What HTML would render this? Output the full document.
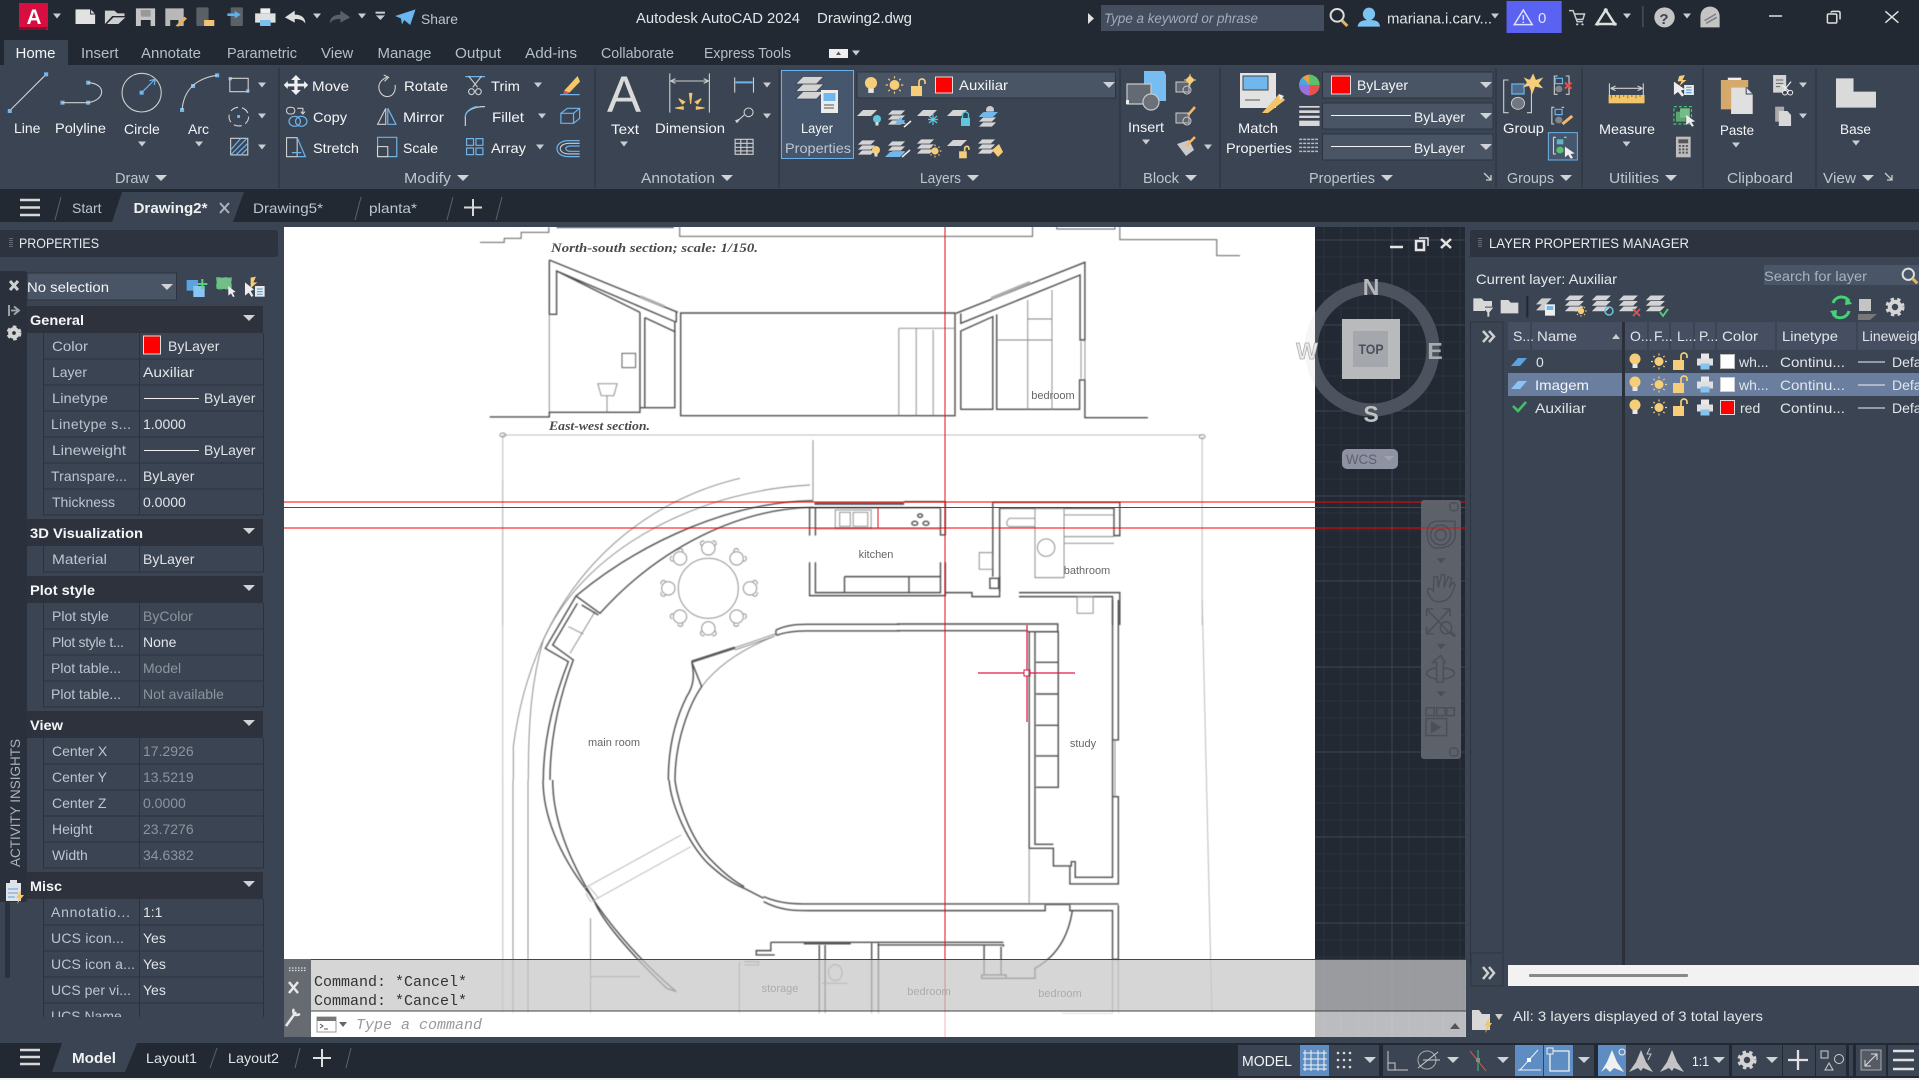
<!DOCTYPE html>
<html><head><meta charset="utf-8"><title>Autodesk AutoCAD 2024</title>
<style>
html,body{margin:0;padding:0;width:1919px;height:1080px;overflow:hidden;background:#222933}
svg{display:block;font-family:"Liberation Sans",sans-serif;font-size:14px}
svg *{vector-effect:non-scaling-stroke}
text{fill:#e2e6ea}
.m text,text.m{fill:#b4bfca}
.l text,text.l{fill:#bcc6d0}
.s{font-size:15px}
.w text,text.w{fill:#f4f6f8}
.d text,text.d{fill:#8d949e}
.h text{font-weight:bold;fill:#f4f6f8}
.p *{fill:none;stroke:#606060;stroke-width:1}
.p .t{stroke-width:1.4;stroke:#4e4e4e}
.p .f{stroke:#b5b5b5;stroke-width:.9}
.p .g{stroke:#858585;stroke-width:.9}
.pt text{fill:#666;font-size:11px}
.gl{stroke:#cfcfcf;fill:none;stroke-width:1.1}
.bl{stroke:#6cb4ea;fill:none;stroke-width:1.2}
.cmd{font-family:"Liberation Mono",monospace;font-size:15px}
</style></head><body>
<svg width="1919" height="1080" viewBox="0 0 1919 1080" xmlns="http://www.w3.org/2000/svg">
<defs>
<path id="c" d="M-4-2.5H4L0 2.5Z" fill="#c9ccd0"/>
<path id="cl" d="M-6-3H6L0 3Z" fill="#cfd2d6"/>
<g id="stack"><path d="M-6-9H8L3-4H-11ZM-6-4H8L3 1H-11ZM-6 1H8L3 6H-11Z" fill="#d4d4d4" stroke="#3b4453" stroke-width=".8"/></g>
<path id="plate" d="M-5-8H9L3-2H-11Z" fill="#d4d4d4"/>
<g id="bulb"><circle r="5.5" fill="#f6cd78"/><path d="M-2.5 5H2.5V9H-2.5Z" fill="#e8e8e8"/></g>
<g id="sun"><circle r="4.5" fill="#f6cd78"/><path d="M0-8V-6M0 6V8M-8 0H-6M6 0H8M-5.6-5.6L-4.3-4.3M5.6 5.6L4.3 4.3M-5.6 5.6L-4.3 4.3M5.6-5.6L4.3-4.3" stroke="#f6cd78" stroke-width="1.2" fill="none"/></g>
<g id="lock"><path d="M-7-1H4V9H-7Z" fill="#f6cd78"/><path d="M1-1V-5C1-9 7-9 7-5V-3" stroke="#f6cd78" stroke-width="1.7" fill="none"/></g>
<g id="print"><path d="M-4-8H4V-3H-4Z" fill="#e8e8e8"/><path d="M-8-3H8V4H-8Z" fill="#e0e0e0"/><path d="M-4.500 2H4.500V8H-4.500Z" fill="#84c4ef"/></g>
<g id="gear"><circle r="5.500" fill="none" stroke="#d4d4d4" stroke-width="4"/><circle r="8.500" fill="none" stroke="#d4d4d4" stroke-width="3" stroke-dasharray="3.400 3.270"/></g>
<g id="chair"><circle r="20" /><path d="M-20-8C-28-14-22-24-12-22M20-8C28-14 22-24 12-22"/></g>
<clipPath id="cr"><rect x="1315" y="227" width="150" height="300"/></clipPath>
<clipPath id="cw"><rect x="1240" y="227" width="75" height="300"/></clipPath>
<clipPath id="cvs"><rect x="284" y="227" width="1031" height="810"/></clipPath>
<clipPath id="rowc"><rect x="27" y="333" width="240" height="684"/></clipPath>
</defs>

<rect width="1919" height="1080" fill="#222933"/>
<!-- ribbon -->
<rect x="4" y="40" width="64" height="25" fill="#3b4453"/>
<rect y="65" width="1919" height="124" fill="#3b4453"/>
<path d="M279 68V188M595 68V188M779 68V188M1120 68V188M1220 68V188M1496 68V188M1582 68V188M1703 68V188M1816 68V188" stroke="#2a303b" stroke-width="1"/>
<!-- main body -->
<rect y="222" width="1919" height="821" fill="#3b4453"/>
<!-- model canvas -->
<rect x="1315" y="227" width="150" height="810" fill="#222933"/>
<g stroke="#2c333f" stroke-width="1"><path d="M1324 227V1037M1341 227V1037M1358 227V1037M1375 227V1037M1409 227V1037M1426 227V1037M1443 227V1037M1460 227V1037M1315 257H1465M1315 274H1465M1315 291H1465M1315 308H1465M1315 342H1465M1315 359H1465M1315 376H1465M1315 393H1465M1315 428H1465M1315 445H1465M1315 462H1465M1315 479H1465M1315 513H1465M1315 530H1465M1315 547H1465M1315 564H1465M1315 598H1465M1315 615H1465M1315 632H1465M1315 649H1465M1315 684H1465M1315 701H1465M1315 718H1465M1315 735H1465M1315 769H1465M1315 786H1465M1315 803H1465M1315 820H1465M1315 854H1465M1315 871H1465M1315 888H1465M1315 905H1465M1315 940H1465M1315 957H1465"/></g>
<path d="M1392 227V1037M1315 240H1465M1315 325H1465M1315 411H1465M1315 496H1465M1315 581H1465M1315 667H1465M1315 752H1465M1315 837H1465M1315 923H1465" stroke="#3c4555" stroke-width="1"/>
<rect x="284" y="227" width="1031" height="810" fill="#fff"/>

<!-- plan drawing -->
<g clip-path="url(#cvs)">
<g style="filter:blur(.45px)">
<g class="p" transform="translate(480,225) scale(.4847,.3333)">
<path d="M0 52H50V40H85V22H142V6"/>
<path d="M158 5H400" style="stroke-width:3;stroke:#666"/>
<path d="M412 5V34H1140V5M1190 5V12H1310V5M1320 5V44H1520V92H1568"/>
<path class="t" d="M143 105L408 262M143 105V268H158V138L330 262M158 138L402 290V320L340 278M405 262V292"/>
<path class="g" d="M143 268V562"/>
<path class="t" d="M20 576H143V562H330V262M340 278V548H402V320M340 548H330"/>
<path class="t" d="M414 264H980V572H414Z"/>
<path class="g" d="M864 310H980M864 310V572M900 310V572M935 315V572"/>
<path class="t" d="M982 265L1248 112V345H1238V150L992 295V265M992 318L1058 275V553H992ZM1066 268V553H1237V465H1248V578H1378"/>
<path class="g" d="M1130 225V553M1180 195V553M1130 282H1180M1066 345H1180M1248 345V465M1240 350V460"/>
<rect x="293" y="385" width="28" height="43"/>
<path class="g" d="M243 476H283L276 512H250ZM262 512V560"/>
<path d="M330 215L380 245M1055 220L1135 172" style="stroke-width:3;stroke:#aaa"/>
<!-- site -->
<path class="f" d="M47 630H1490M47 630V1200M1490 635V1200"/>
<circle cx="47" cy="630" r="6" class="g"/><circle cx="1490" cy="635" r="6" class="g"/>
<path class="g" d="M687 645V830"/>
<!-- kitchen -->
<path d="M690 836H875" style="stroke:#555;stroke-width:2.500"/>
<path class="t" d="M875 830H960M680 848H950M692 848V932M680 848V932M950 850V930H960V830"/>
<rect x="733" y="855" width="74" height="54" class="g"/><rect x="742" y="862" width="22" height="42" class="g"/><rect x="770" y="862" width="30" height="42" class="g"/>
<circle cx="908" cy="872" r="5" class="t"/><circle cx="897" cy="895" r="6" class="t"/><circle cx="920" cy="895" r="6" class="t"/>
<path class="g" d="M692 912H950"/>
<path class="t" d="M680 1012V1112H960V1012M692 1012V1103H950V1012"/>
<path class="t" d="M752 1055H950M752 1055V1103M885 1055V1103"/>
<!-- bathroom -->
<path class="t" d="M1058 832H1320V932H1308V850H1072V1100M1058 832V1055"/>
<rect x="1145" y="850" width="60" height="208" class="g"/>
<ellipse cx="1168" cy="968" rx="18" ry="26" class="g"/>
<path class="g" d="M1205 870H1308M1205 935H1308M1205 955H1308M1092 880H1145M1092 905H1145M1092 880C1085 890 1085 900 1092 905"/>
<rect x="1030" y="983" width="27" height="50" class="g"/>
<path class="t" d="M1112 1103H1320V1200M1112 1115H1305V1200M960 1103H1015V1115H1072V1055M1052 1060H1070V1090H1052Z"/>
<rect x="1232" y="1115" width="33" height="50" class="g"/>
</g>
<!-- arc walls + table (uniform crop coords) -->
<g class="p" transform="translate(500,480) scale(.3333)">
<path class="f" d="M8 0V900"/>
<path class="g" d="M720-5C400 70 100 330 40 800V900"/>
<path class="g" d="M930 15C620 30 260 190 130 480C95 600 85 720 85 900"/>
<path class="t" d="M938 62C700 65 430 180 228 348L136 505L205 545C160 660 130 780 130 900"/>
<path class="t" d="M940 82C720 85 480 200 300 400L228 348M232 370L158 495L220 540C175 660 150 780 150 900"/>
<path class="g" d="M285 395L210 520M205 440L250 462"/>
<path class="t" d="M245 375L295 405"/>
<!-- table -->
<circle cx="625" cy="325" r="90" class="g"/>
<use href="#chair" transform="translate(625,205)" class="g"/><use href="#chair" transform="translate(710,235) rotate(45)" class="g"/><use href="#chair" transform="translate(750,325) rotate(90)" class="g"/><use href="#chair" transform="translate(710,410) rotate(135)" class="g"/><use href="#chair" transform="translate(625,445) rotate(180)" class="g"/><use href="#chair" transform="translate(540,410) rotate(225)" class="g"/><use href="#chair" transform="translate(505,325) rotate(270)" class="g"/><use href="#chair" transform="translate(540,235) rotate(315)" class="g"/>
<!-- courtyard top -->
<path d="M575 545L705 503" style="stroke:#555;stroke-width:2.500"/>
<path class="g" d="M705 503L825 462M705 510L825 468M605 620C650 560 720 510 820 470"/>
<path class="t" d="M828 450C860 435 890 433 920 433H1200M830 466C860 455 890 453 920 453H1200M828 450V466"/>
<path class="t" d="M575 545C585 590 580 620 560 650C525 720 505 800 505 900M575 545L605 620C570 670 525 780 525 900"/>
</g>
<g class="p" transform="translate(480,600) scale(.4847,.3333)">
<path class="f" d="M47 540V1240M1490 0L1510 1240"/>
<path class="g" d="M68 540V1240M99 540V1240"/>
<path class="t" d="M130 540C130 640 160 760 225 880C260 960 320 1070 405 1175L385 1165C310 1060 250 960 235 900C175 760 150 640 150 540"/>
<path class="g" d="M228 955V1240"/>
<path class="g" d="M228 1130H330"/>
<path class="t" d="M390 540C395 620 430 730 470 790C500 830 520 850 545 865L585 895M402 540C410 620 440 730 480 785C505 822 525 845 545 860"/>
<path class="t" d="M585 890C620 912 650 912 680 912H1317M585 905C620 932 650 932 680 932H1166V915"/>
<path class="t" d="M860 72H1192V95H1130M860 92H1130"/>
<path class="t" d="M1133 95V745H1183V798H1220V785H1228V832H1305V0M1145 95V733H1183"/>
<path class="t" d="M1147 95H1193V562H1147M1147 187H1193M1147 282H1193M1147 376H1193M1147 468H1193"/>
<path class="t" d="M1317 0V420H1305M1305 590H1317V852H1217V800"/>
<path class="t" d="M1217 915V932H1305V1078H1317V915"/>
<path class="g" d="M1310 420V590M1133 745V915M1166 915H1217"/>
<path class="t" d="M1222 932C1215 1000 1195 1065 1145 1105V1135H1085"/>
<path class="t" d="M600 1027H1080M820 1035H1080V1040M600 1027V1052H570V1065H608"/>
<path d="M668 1030H765" style="stroke:#555;stroke-width:2.500"/>
<path class="t" d="M700 1035V1240M712 1035V1240M808 1030V1240M822 1030V1240M1040 1035V1125M1075 1040V1125M1035 1125H1085V1135H1035Z"/>
<path class="g" d="M535 1085V1240M545 1085H575V1095H545M705 1150H760"/>
<ellipse cx="733" cy="1118" rx="14" ry="24" class="g"/>
<path class="f" d="M415 705L215 865M435 740L230 905M225 860L245 895M218 880L228 905"/>
<path class="g" d="M1305 1078V1240M1317 1078V1240M1200 1240H1305"/>
</g>
</g>
<g class="pt">
<text x="876" y="558" text-anchor="middle">kitchen</text>
<text x="1087" y="574" text-anchor="middle">bathroom</text>
<text x="1053" y="399" text-anchor="middle">bedroom</text>
<text x="614" y="746" text-anchor="middle">main room</text>
<text x="1083" y="747" text-anchor="middle">study</text>
<text x="780" y="992" text-anchor="middle">storage</text>
<text x="929" y="995" text-anchor="middle">bedroom</text>
<text x="1060" y="997" text-anchor="middle">bedroom</text>
</g>
<text x="551" y="252" textLength="207" lengthAdjust="spacingAndGlyphs" style="font-family:'Liberation Serif',serif;font-style:italic;font-weight:bold;font-size:13px;fill:#4a4a4a">North-south section; scale:  1/150.</text>
<text x="549" y="430" textLength="101" lengthAdjust="spacingAndGlyphs" style="font-family:'Liberation Serif',serif;font-style:italic;font-weight:bold;font-size:13px;fill:#4a4a4a">East-west section.</text>
</g>

<!-- red lines -->
<path d="M284 502H1465M284 507.500H1465M284 528H1465" stroke="#f00" stroke-width="1"/>
<path d="M945 227V1037" stroke="#e0101a" stroke-width="1"/>
<path d="M878 507V528" stroke="#e0101a" stroke-width="1"/>
<path d="M978 673H1024M1030 673H1075M1027 625V670M1027 676V722" stroke="#e5194a" stroke-width="1.200"/>
<rect x="1024" y="670" width="6" height="6" fill="none" stroke="#e5194a" stroke-width="1"/>

<!-- viewcube -->
<circle cx="1372" cy="349" r="61" fill="none" stroke="#4d535e" stroke-width="13" clip-path="url(#cr)"/>
<circle cx="1372" cy="349" r="61" fill="none" stroke="#f6f6f6" stroke-width="13" clip-path="url(#cw)"/>
<rect x="1342" y="319" width="58" height="60" fill="#b9babc"/>
<rect x="1353" y="331" width="35" height="36" fill="#a4a7ac"/>
<text x="1371" y="354" text-anchor="middle" style="fill:#4a505c;font-weight:bold;font-size:14px" textLength="25" lengthAdjust="spacingAndGlyphs">TOP</text>
<g style="font-weight:bold;font-size:23px" text-anchor="middle">
<text x="1371" y="295" style="fill:#b5b7ba">N</text>
<text x="1435" y="359" style="fill:#a8abaf">E</text>
<text x="1371" y="422" style="fill:#bfc1c3">S</text>
<text x="1307" y="359" style="fill:#e8e8e8;stroke:#aaa;stroke-width:.7">W</text>
</g>
<rect x="1342" y="449" width="56" height="20" rx="5" fill="#8e92a2"/>
<text x="1346" y="464" style="fill:#5d6170;font-size:14px" textLength="31" lengthAdjust="spacingAndGlyphs">WCS</text>
<path d="M1384 456H1394L1389 461Z" fill="#a0a3b0"/>
<path d="M1390 247H1403" stroke="#e4e4e4" stroke-width="2.500"/>
<rect x="1416" y="241" width="8" height="9" fill="none" stroke="#e4e4e4" stroke-width="2.500"/><path d="M1419 238H1428V246" fill="none" stroke="#e4e4e4" stroke-width="1.500"/>
<path d="M1441 239L1451 248M1451 239L1441 248" stroke="#e4e4e4" stroke-width="2.500"/>

<!-- nav bar -->
<rect x="1421" y="500" width="40" height="259" rx="3" fill="#60656d" fill-opacity=".94"/>
<g transform="translate(1260,225) scale(.3333,.3571)" fill="none" stroke="#4b5058" stroke-width="1.500">
<rect x="570" y="778" width="24" height="22" rx="8"/>
<path d="M502 860C502 820 540 830 585 830V870C585 900 550 905 530 905C510 905 502 885 502 860Z"/>
<ellipse cx="542" cy="868" rx="30" ry="28"/><ellipse cx="542" cy="868" rx="16" ry="15"/>
<path d="M535 935H552L543 945Z" fill="#4b5058"/>
<path d="M510 1040C495 1020 505 1010 520 1025L522 985L532 985L535 1015L545 978L555 980L552 1015L565 985L575 990L568 1015L580 1000L585 1008C575 1040 565 1055 535 1055C525 1055 515 1050 510 1040Z"/>
<path d="M500 1075L570 1145M570 1075L500 1145M500 1075H520M500 1075V1095M570 1075H550M570 1075V1095M500 1145V1125M500 1145H520"/>
<circle cx="558" cy="1128" r="17"/><path d="M570 1140L586 1152" stroke-width="3"/>
<path d="M535 1175H552L543 1185Z" fill="#4b5058"/>
<path d="M530 1280V1225H518L542 1205L555 1225H550V1280ZM530 1240C490 1245 490 1265 530 1272M550 1240C595 1245 595 1265 550 1272"/>
<path d="M535 1308H552L543 1318Z" fill="#4b5058"/>
<rect x="498" y="1352" width="25" height="22"/><rect x="530" y="1352" width="25" height="22"/><rect x="560" y="1352" width="23" height="22"/>
<rect x="498" y="1382" width="62" height="48"/><path d="M515 1392L540 1406L515 1420Z" fill="#4b5058"/>
<rect x="570" y="1465" width="24" height="22" rx="8"/>
</g>
<path d="M1421 528H1465" stroke="#f00" stroke-opacity=".7" stroke-width="1"/>

<!-- command window -->
<rect x="284" y="959" width="27" height="78" fill="#666b72"/>
<rect x="311" y="959" width="1155" height="52" fill="rgba(198,198,198,.724)"/>
<rect x="311" y="1011" width="1155" height="26" fill="rgba(255,255,255,.69)"/>
<path d="M311 959.500H1466M311 1011H1466" stroke="#444" stroke-width="1"/>
<path d="M289 968H306M289 970.500H306" stroke="#ddd" stroke-width="1.200" stroke-dasharray="1.500 1.500"/>
<path d="M289 982L298 993M298 982L289 993" stroke="#e8e8e8" stroke-width="2.500"/>
<path d="M286 1026L296 1012M294 1009C292 1012 294 1017 300 1014" stroke="#e8e8e8" stroke-width="2.500" fill="none"/>
<g class="cmd"><text x="314" y="986" style="fill:#333">Command: *Cancel*</text><text x="314" y="1005" style="fill:#333">Command: *Cancel*</text><text x="356" y="1029" style="fill:#999;font-style:italic">Type a command</text></g>
<rect x="317" y="1017" width="19" height="15" fill="#fff" stroke="#999"/><rect x="317" y="1017" width="19" height="4" fill="#777"/><path d="M320 1024L323 1026L320 1028M324 1029H328" stroke="#555" fill="none"/>
<path d="M339 1022H347L343 1027Z" fill="#666"/>
<path d="M1450 1029H1460L1455 1023Z" fill="#555"/>

<!-- title bar -->
<rect x="19" y="3" width="29" height="27" fill="#d80e41"/>
<path d="M19 30H46L48 27H19Z" fill="#8e0b30"/>
<text x="26.500" y="24" style="fill:#fff;font-weight:bold;font-size:21px" textLength="15" lengthAdjust="spacingAndGlyphs">A</text>
<use href="#c" x="57" y="16"/><use href="#c" x="317" y="16"/><use href="#c" x="362" y="16"/>
<g transform="scale(.4082,.3333)">
<path d="M185 28H222L233 42V72H185Z" fill="#e2e2e2"/><path d="M222 28V42H233" fill="none" stroke="#222933" stroke-width="1"/>
<path d="M257 72V32H280L288 40H305V48H275ZM262 72L278 52H307L290 72Z" fill="#cfcfcf"/>
<path d="M333 25H380V78H333Z" fill="#c4c4c4"/><rect x="345" y="60" width="24" height="18" fill="#222933"/><rect x="345" y="30" width="24" height="20" fill="#999"/>
<path d="M405 25H450V78H405Z" fill="#b8b8b8"/><rect x="417" y="60" width="20" height="18" fill="#222933"/><path d="M430 78L452 50L458 56L438 80Z" fill="#e5b060"/>
<rect x="481" y="22" width="30" height="56" rx="3" fill="#5b6067"/><path d="M500 60H525V78H500Z" fill="#f0c674"/>
<rect x="565" y="22" width="30" height="56" rx="3" fill="#5b6067"/><path d="M557 40H575V33L590 44L575 55V48H557Z" fill="#5eb0ee"/>
<path d="M638 25H662V40H638Z" fill="#eee"/><path d="M625 40H675V68H625Z" fill="#e0e0e0"/><rect x="637" y="60" width="26" height="18" fill="#7cc0ee"/>
<path d="M698 52L722 32V44C740 44 748 55 748 70C742 60 735 57 722 57V68Z" fill="#dedede"/>
<path d="M858 52L834 32V44C816 44 808 55 808 70C814 60 821 57 834 57V68Z" fill="#5a5f67"/>
<path d="M920 38H943" stroke="#ccc" stroke-width="2"/><path d="M921 46H943L932 60Z" fill="#ccc"/>
<path d="M968 48L1018 28L1005 75L990 60L985 74L982 55Z" fill="#6ab7f0"/>
</g>
<text x="421" y="24" class="l" textLength="37" lengthAdjust="spacingAndGlyphs">Share</text>
<text x="636" y="23" class="s" textLength="164" lengthAdjust="spacingAndGlyphs">Autodesk AutoCAD 2024</text>
<text x="817" y="23" class="s" textLength="95" lengthAdjust="spacingAndGlyphs">Drawing2.dwg</text>
<path d="M1088 13L1094 18.500L1088 24Z" fill="#e0e0e0"/>
<rect x="1101" y="5" width="223" height="26" fill="#434d5e"/>
<text x="1104" y="23" style="fill:#a2abb7;font-style:italic;font-size:13.500px" textLength="154" lengthAdjust="spacingAndGlyphs">Type a keyword or phrase</text>
<g transform="translate(1280,0) scale(.4082,.3333)">
<ellipse cx="140" cy="46" rx="16" ry="19" fill="none" stroke="#ddd" stroke-width="2"/><path d="M152 62L165 78" stroke="#e2b566" stroke-width="3"/>
<ellipse cx="218" cy="42" rx="15" ry="19" fill="#7cc3f2"/><path d="M190 80C192 62 205 60 218 60C232 60 244 62 245 80Z" fill="#7cc3f2"/>
<rect x="555" y="3" width="135" height="96" fill="#5a62f2"/>
<path d="M596 30L618 74H574Z" fill="none" stroke="#dfe2ff" stroke-width="1.500"/><path d="M596 45V60M596 65V69" stroke="#dfe2ff" stroke-width="1.500"/>
<path d="M708 32H718L728 65H742M722 42H746L742 58H726" fill="none" stroke="#ccc" stroke-width="1.500"/><circle cx="728" cy="73" r="3" fill="#ccc"/><circle cx="741" cy="73" r="3" fill="#ccc"/>
<path d="M798 30L820 72H776Z" fill="none" stroke="#dedede" stroke-width="2.500"/><circle cx="798" cy="30" r="5" fill="#dedede"/><circle cx="778" cy="72" r="5" fill="#dedede"/><circle cx="820" cy="72" r="5" fill="#dedede"/>
<path d="M889 18V82" stroke="#5a5f67" stroke-width="1"/>
<ellipse cx="942" cy="52" rx="25" ry="30" fill="#c4c4c4"/>
<path d="M1030 82V50C1030 10 1077 10 1077 50V82Z" fill="#c4c4c4"/><path d="M1040 62L1068 42M1044 70L1070 52" stroke="#7a7f86" stroke-width="1.500"/>
<path d="M1198 48H1230" stroke="#e0e0e0" stroke-width="1.500"/>
<rect x="1341" y="42" width="23" height="27" rx="3" fill="none" stroke="#e0e0e0" stroke-width="1.500"/><path d="M1350 38C1350 35 1352 34 1355 34H1368C1371 34 1372 36 1372 39V58" fill="none" stroke="#e0e0e0" stroke-width="1.500"/>
<path d="M1483 34L1515 68M1515 34L1483 68" stroke="#e0e0e0" stroke-width="1.500"/>
</g>
<text x="1387" y="23.500" class="s" textLength="105" lengthAdjust="spacingAndGlyphs">mariana.i.carv...</text>
<use href="#c" x="1495" y="16"/>
<text x="1538" y="23" style="fill:#dfe2ff" class="s">0</text>
<use href="#c" x="1627" y="16"/><use href="#c" x="1687" y="16"/>
<text x="1664" y="24" text-anchor="middle" style="fill:#3b4453;font-weight:bold;font-size:15px">?</text>

<!-- ribbon tabs -->
<g class="s m">
<text x="15.500" y="58" class="w">Home</text>
<text x="81" y="58" class="m">Insert</text><text x="141" y="58" class="m" textLength="60" lengthAdjust="spacingAndGlyphs">Annotate</text><text x="227" y="58" class="m" textLength="70" lengthAdjust="spacingAndGlyphs">Parametric</text><text x="321" y="58" class="m">View</text><text x="377.500" y="58" class="m" textLength="54" lengthAdjust="spacingAndGlyphs">Manage</text><text x="455" y="58" class="m" textLength="46" lengthAdjust="spacingAndGlyphs">Output</text><text x="525" y="58" class="m" textLength="52" lengthAdjust="spacingAndGlyphs">Add-ins</text><text x="601" y="58" class="m" textLength="73" lengthAdjust="spacingAndGlyphs">Collaborate</text><text x="704" y="58" class="m" textLength="87" lengthAdjust="spacingAndGlyphs">Express Tools</text>
</g>
<rect x="829" y="49" width="19" height="9" fill="#eee"/><path d="M836 55H841L838.500 51.500Z" fill="#555"/><use href="#c" x="856" y="53"/>

<!-- DRAW / MODIFY icons (zoom1 coords) -->
<g transform="scale(.4082,.3333)">
<path class="gl" d="M23 333L113 223"/>
<g fill="#6fb7ec"><rect x="19" y="327" width="10" height="12"/><rect x="108" y="217" width="10" height="12"/>
<rect x="148" y="302" width="10" height="12"/><rect x="211" y="302" width="10" height="12"/><rect x="211" y="242" width="10" height="12"/>
<rect x="342" y="272" width="10" height="12"/><rect x="441" y="324" width="10" height="12"/><rect x="468" y="252" width="10" height="12"/><rect x="527" y="220" width="10" height="12"/>
<rect x="560" y="231" width="8" height="10"/><rect x="603" y="268" width="8" height="10"/><rect x="581" y="345" width="7" height="9"/></g>
<path class="gl" d="M152 308H216C260 300 260 250 216 248"/>
<ellipse cx="347" cy="278" rx="48" ry="58" class="gl"/><path class="bl" d="M347 278L378 240M366 242L380 238L378 255"/>
<path class="gl" d="M446 330C450 270 480 235 532 226"/>
<rect x="563" y="235" width="45" height="40" class="gl"/>
<ellipse cx="585" cy="350" rx="24" ry="28" class="gl" stroke-dasharray="8 4"/>
<rect x="565" y="415" width="42" height="50" class="gl"/>
<path class="bl" d="M565 450L590 415M565 465L605 415M578 465L607 430M590 465L607 445"/>
<path d="M725 225L737 240H729V251H745V243L755 255L745 267V259H729V270H737L725 285L713 270H721V259H705V267L695 255L705 243V251H721V240H713Z" fill="#f0f0f0"/>
<rect x="702" y="322" width="20" height="20" rx="8" class="gl"/><path class="gl" d="M728 325H742V340M737 335L742 342L747 335"/>
<ellipse cx="722" cy="364" rx="14" ry="15" class="bl"/><ellipse cx="738" cy="364" rx="14" ry="15" class="bl"/>
<path class="gl" d="M702 413V470H728V413Z"/><path class="bl" d="M728 413L748 470H728M715 458H738"/>
<path class="gl" d="M968 255C972 300 930 300 928 262C928 245 940 235 948 232M940 225L952 232L942 244"/>
<path class="gl" d="M925 373L945 325V373Z"/><path class="bl" d="M970 373L950 325V373Z"/>
<rect x="925" y="412" width="47" height="58" class="bl"/><rect x="925" y="440" width="25" height="30" fill="#3b4453" stroke="#e0e0e0"/>
<path class="bl" d="M1140 230H1188"/><path class="gl" d="M1148 228L1170 262M1180 228L1158 262"/><ellipse cx="1155" cy="275" rx="7" ry="9" class="gl"/><ellipse cx="1172" cy="275" rx="7" ry="9" class="gl"/>
<path class="bl" d="M1140 378V350C1140 332 1160 320 1188 320" style="stroke:#cfcfcf"/><path class="bl" d="M1140 350C1140 332 1160 320 1170 320"/>
<g class="bl"><rect x="1143" y="416" width="17" height="20"/><rect x="1166" y="416" width="17" height="20"/><rect x="1143" y="444" width="17" height="20"/><rect x="1166" y="444" width="17" height="20"/></g>
<path d="M1382 272L1415 228L1421 245L1395 278Z" fill="#f4c768"/><path d="M1382 272L1395 278L1388 284L1380 282Z" fill="#e25548"/><path class="bl" d="M1372 284H1420"/>
<path d="M1374 340H1405V370H1374ZM1374 340L1390 325H1420V355L1405 370M1405 340L1420 325" fill="none" stroke="#6cb4ea" stroke-width="1.200"/>
<path class="gl" d="M1420 430H1395C1365 430 1365 462 1395 462H1420"/><path class="bl" d="M1420 422H1393C1355 422 1355 470 1393 470H1420"/><path class="bl" d="M1420 438H1398C1382 438 1382 454 1398 454H1420"/>
</g>
<g text-anchor="start" class="w">
<text x="14" y="133" class="w">Line</text><text x="55" y="133" class="w" textLength="51" lengthAdjust="spacingAndGlyphs">Polyline</text><text x="124" y="134" class="w">Circle</text><text x="188" y="134" class="w">Arc</text>
<text x="312" y="91" class="w" textLength="37" lengthAdjust="spacingAndGlyphs">Move</text><text x="313" y="122" class="w" textLength="34" lengthAdjust="spacingAndGlyphs">Copy</text><text x="313" y="153" class="w" textLength="46" lengthAdjust="spacingAndGlyphs">Stretch</text>
<text x="404" y="91" class="w" textLength="44" lengthAdjust="spacingAndGlyphs">Rotate</text><text x="403" y="122" class="w" textLength="41" lengthAdjust="spacingAndGlyphs">Mirror</text><text x="403" y="153" class="w" textLength="35" lengthAdjust="spacingAndGlyphs">Scale</text>
<text x="491" y="91" class="w" textLength="29" lengthAdjust="spacingAndGlyphs">Trim</text><text x="492" y="122" class="w" textLength="32" lengthAdjust="spacingAndGlyphs">Fillet</text><text x="491" y="153" class="w" textLength="35" lengthAdjust="spacingAndGlyphs">Array</text>
</g>
<use href="#c" x="142" y="144"/><use href="#c" x="199" y="144"/><use href="#c" x="262" y="85"/><use href="#c" x="262" y="116"/><use href="#c" x="262" y="147"/>
<use href="#c" x="538" y="85"/><use href="#c" x="542" y="116"/><use href="#c" x="540" y="147"/>
<text x="115" y="183" class="l s" textLength="34" lengthAdjust="spacingAndGlyphs">Draw</text><use href="#cl" x="161" y="178"/>
<text x="404" y="183" class="l s" textLength="47" lengthAdjust="spacingAndGlyphs">Modify</text><use href="#cl" x="463" y="178"/>

<!-- ANNOTATION + LAYERS + BLOCK (zoom2 coords) -->
<text x="607" y="112" style="fill:#dadada;font-size:51px">A</text>
<text x="611" y="134" class="w" textLength="28" lengthAdjust="spacingAndGlyphs">Text</text><use href="#c" x="624" y="144"/>
<g transform="translate(640,0) scale(.4082,.3333)">
<path class="gl" d="M73 220V338M170 220V338M75 243H168M75 243L87 236M75 243L87 250M168 243L156 236M168 243L156 250"/>
<path d="M121 280L127 280L124 312ZM95 296L110 306L104 312ZM150 296L135 306L141 312ZM86 324L106 320V328ZM158 324L138 320V328Z" fill="#f3c56a" stroke="#f3c56a" stroke-width="1"/>
<path class="gl" d="M232 232V278M278 232V278"/><path class="bl" d="M234 247H276" style="stroke-width:2"/>
<path class="gl" d="M235 368L255 345"/><ellipse cx="266" cy="337" rx="11" ry="13" class="gl"/><path d="M232 362L245 355L240 368Z" fill="#cfcfcf"/>
<rect x="233" y="418" width="44" height="45" class="gl"/><path class="gl" d="M233 430H277M233 442H277M233 453H277M247 418V463M262 418V463"/>
</g>
<use href="#c" x="767" y="85"/><use href="#c" x="767" y="116"/>
<text x="655" y="133" class="w" textLength="70" lengthAdjust="spacingAndGlyphs">Dimension</text>
<text x="641" y="183" class="l s" textLength="74" lengthAdjust="spacingAndGlyphs">Annotation</text><use href="#cl" x="727" y="178"/>
<rect x="781.500" y="70.500" width="72" height="88" fill="#46566c" stroke="#6ab1e8" stroke-width="1"/>
<use href="#stack" transform="translate(812,90) scale(1.500)"/>
<rect x="821" y="90" width="17" height="23" fill="#ececec"/><rect x="823.500" y="93" width="12" height="8" fill="#6fb7ec"/><path d="M824 105H834M824 108H834" stroke="#555"/>
<text x="801" y="133" class="w" textLength="32" lengthAdjust="spacingAndGlyphs">Layer</text><text x="785" y="153" class="l" textLength="66" lengthAdjust="spacingAndGlyphs">Properties</text>
<rect x="857" y="72" width="258.500" height="26" fill="#495465" stroke="#2d333e" stroke-width="1"/>
<use href="#bulb" transform="translate(871,83) scale(1.100)"/><use href="#sun" transform="translate(894.500,85) scale(1.100)"/><use href="#lock" transform="translate(918,87)"/>
<rect x="935.500" y="77" width="17" height="16" fill="#f00" stroke="#ddd" stroke-width="1"/>
<text x="959" y="90" class="w" textLength="49" lengthAdjust="spacingAndGlyphs">Auxiliar</text>
<use href="#cl" x="1109" y="85"/>
<g>
<use href="#plate" x="868" y="118"/><circle cx="877" cy="119" r="4" fill="#62c7dd"/><rect x="875.500" y="122" width="3" height="3.500" fill="#ddd"/>
<use href="#stack" x="898" y="119"/><path d="M895 124H906L900 117Z" fill="#6fb7ec"/><path d="M911 121L904 127" stroke="#eee" stroke-width="1.500"/>
<use href="#plate" x="928" y="118"/><path d="M933 114V125M928 119.500H938M929 116L937 123M937 116L929 123" stroke="#62c7dd" stroke-width="1.200"/>
<use href="#plate" x="958" y="118"/><rect x="961" y="118" width="9" height="8" fill="#62c7dd"/><path d="M962.500 118V115C962.500 111 968.500 111 968.500 115V118" stroke="#62c7dd" stroke-width="1.300" fill="none"/>
<circle cx="990" cy="110" r="4" fill="#ccc"/><use href="#stack" x="989" y="121"/><path d="M984 112H998L993 117H979Z" fill="#6fb7ec"/>
<use href="#stack" x="868" y="149"/><circle cx="876" cy="150" r="4" fill="#f6cd78"/><rect x="874.500" y="153" width="3" height="3.500" fill="#ddd"/>
<use href="#stack" x="898" y="150"/><path d="M890 152H905L900 157H885Z" fill="#6fb7ec"/><path d="M902 157L910 150" stroke="#eee" stroke-width="1.500"/>
<use href="#stack" x="927" y="148"/><use href="#sun" transform="translate(935,151) scale(.8)"/>
<use href="#plate" x="958" y="148"/><use href="#lock" transform="translate(964,152) scale(.7)"/>
<use href="#stack" x="988" y="148"/><path d="M992 150L999 144L1003 152L998 157Z" fill="#f6cd78"/>
</g>
<text x="920" y="183" class="l s" textLength="41" lengthAdjust="spacingAndGlyphs">Layers</text><use href="#cl" x="973" y="178"/>
<!-- block -->
<path d="M1144 71H1164L1166 75V101H1144Z" fill="#78bdf2"/><rect x="1127" y="84" width="24" height="20" fill="#646a74" stroke="#c9c9c9" stroke-width="1.200"/><circle cx="1151" cy="102" r="8" fill="#6b7079" stroke="#c9c9c9" stroke-width="1.200"/><rect x="1126" y="100" width="3" height="4" fill="#eee"/>
<text x="1128" y="132" class="w" textLength="36" lengthAdjust="spacingAndGlyphs">Insert</text><use href="#c" x="1146" y="142"/>
<rect x="1176" y="82" width="13" height="10" fill="#5f6670" stroke="#ccc"/><circle cx="1187" cy="90" r="4" fill="none" stroke="#ccc"/>
<path d="M1190 76L1194 80L1190 84L1186 80ZM1190 74V86M1184 80H1196" fill="#f6cd78" stroke="#f6cd78"/>
<rect x="1176" y="113" width="13" height="10" fill="#5f6670" stroke="#ccc"/><circle cx="1187" cy="121" r="4" fill="none" stroke="#ccc"/><path d="M1188 115L1195 107" stroke="#f6b868" stroke-width="2.500"/>
<path d="M1177 144L1189 140L1194 150L1186 156Z" fill="#c9c9c9"/><path d="M1186 146L1195 137" stroke="#f6b868" stroke-width="2.500"/>
<use href="#c" x="1208" y="147"/>
<text x="1143" y="183" class="l s" textLength="36" lengthAdjust="spacingAndGlyphs">Block</text><use href="#cl" x="1191" y="178"/>
<!-- match -->
<rect x="1240" y="73" width="36" height="35" fill="#e2e2e2"/><rect x="1243" y="76" width="25" height="14" fill="#6fb7ec" stroke="#444"/><path d="M1245 100H1260" stroke="#555"/>
<path d="M1262 113L1279 94L1285 100L1268 113Z" fill="#f3c56a"/><path d="M1279 94L1284 96L1280 100" fill="#eee"/>
<text x="1238" y="133" class="w" textLength="40" lengthAdjust="spacingAndGlyphs">Match</text><text x="1226" y="153" class="w" textLength="66" lengthAdjust="spacingAndGlyphs">Properties</text>
<!-- properties -->
<g transform="translate(1280,0) scale(.4082,.3333)">
<ellipse cx="72" cy="255" rx="25" ry="31" fill="#e6a23c"/><path d="M72 255L72 224A25 31 0 0 1 97 255Z" fill="#5bc06a"/><path d="M72 255H97A25 31 0 0 1 72 286Z" fill="#e8504a"/><path d="M72 255V286A25 31 0 0 1 47 255Z" fill="#9a6fe0"/><path d="M72 255H47A25 31 0 0 1 55 232Z" fill="#4aa5e0"/>
<rect x="47" y="318" width="50" height="5" fill="#d8d8d8"/><rect x="47" y="331" width="50" height="8" fill="#d8d8d8"/><rect x="47" y="347" width="50" height="7" fill="#d8d8d8"/><rect x="47" y="362" width="50" height="16" fill="#d8d8d8"/>
<path d="M47 418H93M47 430H93M47 442H93M47 454H93" stroke="#bbb" stroke-width="1.500" stroke-dasharray="3 1"/>
</g>
<g fill="#495465" stroke="#2d333e" stroke-width="1"><rect x="1322.500" y="72" width="170.500" height="26"/><rect x="1322.500" y="103" width="170.500" height="26"/><rect x="1322.500" y="134" width="170.500" height="26"/></g>
<rect x="1331.500" y="76" width="19" height="18" fill="#f00" stroke="#ddd"/>
<text x="1357" y="90" class="w" textLength="51" lengthAdjust="spacingAndGlyphs">ByLayer</text>
<path d="M1331 115.500H1411M1331 146.500H1411" stroke="#f2f2f2" stroke-width="1"/>
<text x="1414" y="122" class="w" textLength="51" lengthAdjust="spacingAndGlyphs">ByLayer</text><text x="1414" y="153" class="w" textLength="51" lengthAdjust="spacingAndGlyphs">ByLayer</text>
<use href="#cl" x="1486" y="85"/><use href="#cl" x="1486" y="116"/><use href="#cl" x="1486" y="147"/>
<text x="1309" y="183" class="l s" textLength="66" lengthAdjust="spacingAndGlyphs">Properties</text><use href="#cl" x="1387" y="178"/>
<path d="M1484 173L1491 180M1491 175V180H1486" stroke="#ccc" stroke-width="1.300" fill="none"/>
<!-- groups etc -->
<g transform="translate(1280,0) scale(.4082,.3333)">
<path class="gl" d="M560 240H548V338H560M605 240H616V338H605"/>
<rect x="568" y="252" width="30" height="30" class="bl" style="fill:#4e6a8a"/>
<ellipse cx="583" cy="310" rx="16" ry="18" fill="#72777f" stroke="#ccc"/>
<path d="M620 220L627 240L645 232L634 250L645 265L625 260L618 282L610 258L595 262L605 248L597 232L612 240Z" fill="#f6cd78"/>
<path class="gl" d="M680 228H672V283H680M700 228H708V283H700"/><rect x="674" y="235" width="18" height="16" class="bl"/><ellipse cx="683" cy="267" rx="9" ry="10" fill="#80858c"/><path d="M698 248L714 266M714 248L698 266" stroke="#e8504a" stroke-width="2"/>
<path class="gl" d="M672 322H666V372H672M690 322H696"/><rect x="674" y="328" width="17" height="16" class="bl"/><ellipse cx="683" cy="360" rx="9" ry="10" fill="#80858c"/><path d="M692 372L716 348" stroke="#f6b868" stroke-width="3"/>
<rect x="657.500" y="398" width="71" height="82" fill="#46566c" stroke="#6ab1e8" stroke-width="1"/>
<path class="gl" d="M676 412H670V462H676M696 412H702"/><rect x="678" y="418" width="16" height="15" fill="#5eb7c0"/><ellipse cx="686" cy="450" rx="9" ry="10" fill="#5bc06a"/><path d="M698 440V472L706 464L712 476L718 474L712 462L722 460Z" fill="#eee"/>
<!-- utilities -->
<path class="gl" d="M807 250V285M890 250V285M810 265H888M810 265L822 258M810 265L822 272M888 265L876 258M888 265L876 272"/>
<rect x="805" y="285" width="88" height="25" fill="#f3c56a"/>
<path d="M812 285V295M822 285V291M832 285V295M842 285V291M852 285V295M862 285V291M872 285V295M882 285V291" stroke="#94763c"/>
<path d="M978 228L992 225L986 240L996 240L978 258L984 244L974 244Z" fill="#f6cd78"/>
<path d="M965 245V285L975 276L985 290L990 285L982 272L992 268Z" fill="#eee"/><rect x="990" y="255" width="24" height="30" fill="#e9e9e9"/><path d="M995 262H1008M995 270H1008M995 278H1008" stroke="#5aa3e0" stroke-width="1.200"/>
<rect x="965" y="320" width="43" height="52" fill="none" stroke="#45c070" stroke-width="1.200" stroke-dasharray="3 2"/><rect x="970" y="335" width="24" height="30" fill="#5aa56e"/><rect x="980" y="325" width="24" height="28" fill="#75bd86"/><path d="M995 345V375L1003 368L1009 380L1014 378L1008 366L1017 364Z" fill="#eee"/>
<rect x="970" y="410" width="36" height="62" fill="#bdbdbd"/><rect x="976" y="418" width="24" height="12" fill="#555"/><path d="M977 438H999M977 448H999M977 458H999" stroke="#555" stroke-width="2" stroke-dasharray="2 1.500"/>
<!-- clipboard -->
<path d="M1080 240H1147V262H1105V328H1080Z" fill="#d5a86b"/><path d="M1097 233H1130V240H1097Z" fill="#eee"/>
<path d="M1105 262H1142L1158 282V342H1105Z" fill="#e0e0e0"/><path d="M1142 262V282H1158" fill="none" stroke="#3b4453"/>
<path d="M1208 225H1240V278H1208Z" fill="#d4d4d4"/><path d="M1215 240H1233M1215 250H1233M1215 260H1225" stroke="#666" stroke-width="1"/><path d="M1230 255L1252 278M1252 245L1232 275" stroke="#eee" stroke-width="1.200"/><ellipse cx="1237" cy="278" rx="6" ry="7" fill="#3b4453" stroke="#eee"/><ellipse cx="1250" cy="278" rx="6" ry="7" fill="#3b4453" stroke="#eee"/>
<path d="M1213 320H1235V365H1213Z" fill="#a9a9a9"/><path d="M1222 333H1243L1252 345V378H1222Z" fill="#d8d8d8"/>
<!-- base -->
<path d="M1362 235H1405V275H1460V323H1362Z" fill="#dadada"/>
</g>
<text x="1503" y="133" class="w" textLength="41" lengthAdjust="spacingAndGlyphs">Group</text>
<text x="1507" y="183" class="l s" textLength="47" lengthAdjust="spacingAndGlyphs">Groups</text><use href="#cl" x="1566" y="178"/>
<text x="1599" y="134" class="w" textLength="56" lengthAdjust="spacingAndGlyphs">Measure</text><use href="#c" x="1626.500" y="144"/>
<text x="1609" y="183" class="l s" textLength="50" lengthAdjust="spacingAndGlyphs">Utilities</text><use href="#cl" x="1671" y="178"/>
<text x="1720" y="135" class="w" textLength="34" lengthAdjust="spacingAndGlyphs">Paste</text><use href="#c" x="1736" y="145"/>
<use href="#c" x="1803" y="85"/><use href="#c" x="1803" y="116"/>
<text x="1727" y="183" class="l s" textLength="66" lengthAdjust="spacingAndGlyphs">Clipboard</text>
<text x="1840" y="134" class="w" textLength="31" lengthAdjust="spacingAndGlyphs">Base</text><use href="#c" x="1856" y="143"/>
<text x="1823" y="183" class="l s" textLength="33" lengthAdjust="spacingAndGlyphs">View</text><use href="#cl" x="1868" y="178"/>
<path d="M1885 173L1892 180M1892 175V180H1887" stroke="#ccc" stroke-width="1.300" fill="none"/>

<!-- file tabs -->
<path d="M20 200H40M20 207.500H40M20 215H40" stroke="#d8d8d8" stroke-width="2.500"/>
<path d="M55 220L61 197M355 220L361 197M447 220L453 197M496 220L502 197" stroke="#5a626f" stroke-width="1"/>
<path d="M112 222L122 192H244L233 222Z" fill="#3b4453"/>
<text x="72" y="213" class="l">Start</text>
<text x="133.500" y="213" style="font-weight:bold;fill:#eef0f2;font-size:14.500px" textLength="74" lengthAdjust="spacingAndGlyphs">Drawing2*</text>
<path d="M220 203L229 213M229 203L220 213" stroke="#aeb3ba" stroke-width="2"/>
<text x="253" y="213" class="l" textLength="70" lengthAdjust="spacingAndGlyphs">Drawing5*</text>
<text x="369" y="213" class="l" textLength="48" lengthAdjust="spacingAndGlyphs">planta*</text>
<path d="M473 199V216M464 207.500H482" stroke="#d8d8d8" stroke-width="2"/>

<!-- PROPERTIES panel -->
<path d="M0 230H275Q278 230 278 233V254Q278 257 275 257H0Z" fill="#2e343f"/>
<path d="M10 238V248M12 238V248" stroke="#9aa0a8" stroke-width="1" stroke-dasharray="1 1"/>
<text x="19" y="248" style="fill:#e8ecf0" textLength="80" lengthAdjust="spacingAndGlyphs">PROPERTIES</text>
<rect x="27" y="273" width="149.500" height="27" fill="#495465" stroke="#2d333e"/>
<text x="27" y="292" class="w" textLength="82" lengthAdjust="spacingAndGlyphs">No selection</text>
<use href="#cl" x="167" y="287"/>
<g transform="translate(0,225) scale(.3333)">
<rect x="560" y="165" width="34" height="32" fill="#5aa3e0"/><rect x="580" y="183" width="34" height="33" fill="#8ac6f5"/><path d="M607 162V192M592 177H622" stroke="#5bd07a" stroke-width="2"/>
<rect x="650" y="158" width="44" height="34" fill="#75bd86" stroke="#45c070" stroke-dasharray="4 3"/><path d="M685 183V212L693 205L699 216L704 214L698 203L707 201Z" fill="#eee"/>
<path d="M752 158L768 155L760 172L772 172L752 190Z" fill="#f6cd78"/><path d="M735 172V212L746 203L755 216L760 212L752 198L762 194Z" fill="#eee"/><rect x="765" y="183" width="29" height="32" fill="#e9e9e9"/><path d="M771 192H788M771 200H788M771 208H788" stroke="#5aa3e0" stroke-width="1.200"/>
</g>
<!-- section headers -->
<g fill="#2d323d"><rect x="27" y="306" width="236" height="27"/><rect x="27" y="519" width="236" height="27"/><rect x="27" y="576" width="236" height="27"/><rect x="27" y="711" width="236" height="27"/><rect x="27" y="872" width="236" height="27"/></g>
<g clip-path="url(#rowc)">
<path d="M43 359H263M43 385H263M43 411H263M43 437H263M43 463H263M43 489H263M43 515H263M43 572H263M43 629H263M43 655H263M43 681H263M43 707H263M43 764H263M43 790H263M43 816H263M43 842H263M43 868H263M43 925H263M43 951H263M43 977H263M43 1003H263M43.500 333V515M139.500 333V515M43.500 546V572M139.500 546V572M263.500 333V515M263.500 546V572M43.500 603V707M139.500 603V707M263.500 603V707M43.500 738V868M139.500 738V868M263.500 738V868M43.500 899V1017M139.500 899V1017M263.500 899V1017" stroke="#2c323d" stroke-width="1" fill="none"/>
<g class="l">
<text x="52" y="351" class="l" textLength="36" lengthAdjust="spacingAndGlyphs">Color</text><text x="52" y="377" class="l" textLength="35" lengthAdjust="spacingAndGlyphs">Layer</text><text x="52" y="403" class="l" textLength="56" lengthAdjust="spacingAndGlyphs">Linetype</text><text x="51" y="429" class="l" textLength="80" lengthAdjust="spacing">Linetype s...</text><text x="52" y="455" class="l" textLength="74" lengthAdjust="spacingAndGlyphs">Lineweight</text><text x="51" y="481" class="l" textLength="76">Transpare...</text><text x="52" y="507" class="l">Thickness</text>
<text x="52" y="564" class="l" textLength="55" lengthAdjust="spacingAndGlyphs">Material</text>
<text x="52" y="621" class="l">Plot style</text><text x="52" y="647" class="l" textLength="72">Plot style t...</text><text x="51" y="673" class="l">Plot table...</text><text x="51" y="699" class="l">Plot table...</text>
<text x="52" y="756" class="l">Center X</text><text x="52" y="782" class="l">Center Y</text><text x="52" y="808" class="l">Center Z</text><text x="52" y="834" class="l">Height</text><text x="52" y="860" class="l">Width</text>
<text x="51" y="917" class="l" textLength="79">Annotatio...</text><text x="51" y="943" class="l" textLength="73">UCS icon...</text><text x="51" y="969" class="l" textLength="84">UCS icon a...</text><text x="51" y="995" class="l" textLength="80">UCS per vi...</text><text x="51" y="1021" class="l">UCS Name</text>
</g>
<rect x="143.500" y="336" width="17" height="18" fill="#f00" stroke="#ddd"/>
<text x="168" y="351">ByLayer</text><text x="143" y="377" textLength="51" lengthAdjust="spacingAndGlyphs">Auxiliar</text>
<path d="M144 398.500H199M144 450.500H199" stroke="#f0f0f0"/>
<text x="204" y="403">ByLayer</text><text x="143" y="429">1.0000</text><text x="204" y="455">ByLayer</text><text x="143" y="481">ByLayer</text><text x="143" y="507">0.0000</text>
<text x="143" y="564">ByLayer</text>
<text x="143" y="621" class="d">ByColor</text><text x="143" y="647">None</text><text x="143" y="673" class="d">Model</text><text x="143" y="699" class="d">Not available</text>
<text x="143" y="756" class="d">17.2926</text><text x="143" y="782" class="d">13.5219</text><text x="143" y="808" class="d">0.0000</text><text x="143" y="834" class="d">23.7276</text><text x="143" y="860" class="d">34.6382</text>
<text x="143" y="917">1:1</text><text x="143" y="943">Yes</text><text x="143" y="969">Yes</text><text x="143" y="995">Yes</text>
</g>
<g>
<text x="30" y="325" style="font-weight:bold;fill:#f4f6f8" textLength="54" lengthAdjust="spacingAndGlyphs">General</text>
<text x="30" y="538" style="font-weight:bold;fill:#f4f6f8" textLength="113" lengthAdjust="spacingAndGlyphs">3D Visualization</text>
<text x="30" y="595" style="font-weight:bold;fill:#f4f6f8" textLength="65" lengthAdjust="spacingAndGlyphs">Plot style</text>
<text x="30" y="730" style="font-weight:bold;fill:#f4f6f8" textLength="33" lengthAdjust="spacingAndGlyphs">View</text>
<text x="30" y="891" style="font-weight:bold;fill:#f4f6f8" textLength="32" lengthAdjust="spacingAndGlyphs">Misc</text>
</g>
<use href="#cl" x="249" y="318"/><use href="#cl" x="249" y="531"/><use href="#cl" x="249" y="588"/><use href="#cl" x="249" y="723"/><use href="#cl" x="249" y="884"/>
<!-- left strip -->
<path d="M0 271H24Q27 271 27 274V899Q27 902 24 902H0Z" fill="#2b313c"/>
<rect x="5" y="902" width="5" height="76" rx="2" fill="#2b313c"/>
<path d="M10 281L18 290M18 281L10 290" stroke="#cfcfcf" stroke-width="3"/>
<path d="M9 305V316M11 310.500H17M14 306.500L19 310.500L14 314.500" stroke="#aaa" stroke-width="1.800" fill="none"/>
<use href="#gear" transform="translate(14,333) scale(.7)"/>
<text transform="translate(20,867) rotate(-90)" style="fill:#a9b3be;font-size:13.500px" textLength="128" lengthAdjust="spacingAndGlyphs">ACTIVITY INSIGHTS</text>
<rect x="6" y="883" width="15" height="18" fill="#dfe3e7"/><rect x="10" y="880" width="7" height="4" fill="#dfe3e7"/><path d="M8 889H18M8 893H18M8 897H15" stroke="#5aa3e0"/><path d="M21 890L16 898H19L17 904L24 895H21Z" fill="#f3c56a"/>

<!-- LAYER manager -->
<path d="M1473 230H1919V257H1470V233Q1470 230 1473 230Z" fill="#2e343f"/>
<path d="M1479 238V248M1481 238V248" stroke="#9aa0a8" stroke-width="1" stroke-dasharray="1 1"/>
<text x="1489" y="248" style="fill:#e8ecf0" textLength="200" lengthAdjust="spacingAndGlyphs">LAYER PROPERTIES MANAGER</text>
<text x="1476" y="284" style="fill:#e6e9ec" textLength="141" lengthAdjust="spacingAndGlyphs">Current layer: Auxiliar</text>
<rect x="1764" y="265" width="155" height="20" fill="#4a5567"/>
<text x="1764" y="281" style="fill:#a9b3be" textLength="103" lengthAdjust="spacingAndGlyphs">Search for layer</text>
<g transform="translate(1460,225) scale(.3333)">
<ellipse cx="1345" cy="148" rx="17" ry="17" fill="none" stroke="#ddd" stroke-width="2"/><path d="M1357 160L1372 175" stroke="#e2b566" stroke-width="3"/>
<path d="M40 220H65L72 228H96V245H75V258H40Z" fill="#d8d8d8"/><path d="M70 248H100L88 262V275H82V262Z" fill="#d8d8d8"/>
<path d="M122 225H145L152 233H175V265H122Z" fill="#d8d8d8"/>
<path d="M202 213V278" stroke="#22282f" stroke-width="2"/>
<path d="M245 220H275L258 238H228ZM245 238H260V256H228Z" fill="#cdcdcd"/><rect x="255" y="238" width="30" height="34" fill="#eee"/><rect x="260" y="243" width="20" height="12" fill="#6fb7ec"/>
</g>
<use href="#stack" transform="translate(1576,305) scale(1.100)"/><use href="#sun" transform="translate(1581,311) scale(.7)"/>
<use href="#stack" transform="translate(1603,305) scale(1.100)"/><circle cx="1609" cy="311" r="4" fill="none" stroke="#62c7dd" stroke-width="1.500"/>
<use href="#stack" transform="translate(1630,305) scale(1.100)"/><path d="M1633 309L1640 316M1640 309L1633 316" stroke="#e8504a" stroke-width="1.800"/>
<use href="#stack" transform="translate(1657,305) scale(1.100)"/><path d="M1660 312L1663 316L1668 309" stroke="#5bd07a" stroke-width="1.800" fill="none"/>
<path d="M1833 303A9 9 0 0 1 1849 301M1849 311A9 9 0 0 1 1833 314" stroke="#45d07a" stroke-width="3" fill="none"/><path d="M1846 296L1852 304L1845 305Z" fill="#45d07a"/><path d="M1836 319L1830 311L1837 310Z" fill="#45d07a"/>
<rect x="1859" y="299" width="12" height="12" fill="#c4c4c4"/><path d="M1858 314H1877L1870 320H1858Z" fill="#777"/>
<use href="#gear" transform="translate(1895,307) scale(.95)"/>
<!-- table -->
<rect x="1508" y="322" width="114" height="28" fill="#454f61"/><rect x="1625" y="322" width="294" height="28" fill="#454f61"/>
<rect x="1508" y="373" width="114" height="23" fill="#6a7ea0"/><rect x="1625" y="373" width="294" height="23" fill="#6a7ea0"/>
<path d="M1470.500 322H1503V965M1470.500 322V965" stroke="#2f3540" fill="none"/>
<rect x="1622" y="322" width="3" height="643" fill="#2a2f39"/>
<path d="M1531 322V350M1648 322V350M1670 322V350M1694 322V350M1716 322V350M1776 322V350M1857 322V350" stroke="#343b48" stroke-width="1"/>
<text x="1513" y="341">S...</text><text x="1537" y="341" textLength="40" lengthAdjust="spacingAndGlyphs">Name</text>
<path d="M1612 339H1620L1616 334Z" fill="#ccc"/>
<text x="1630" y="341">O...</text><text x="1654" y="341">F...</text><text x="1677" y="341">L...</text><text x="1699" y="341">P...</text><text x="1722" y="341" textLength="36" lengthAdjust="spacingAndGlyphs">Color</text><text x="1782" y="341" textLength="56" lengthAdjust="spacingAndGlyphs">Linetype</text><text x="1862" y="341">Lineweight</text>
<path d="M1483 331L1488 336.500L1483 342M1489 331L1494 336.500L1489 342" stroke="#d0d0d0" stroke-width="2.500" fill="none"/>
<path d="M1511 366L1518 358H1527L1520 366Z" fill="#5aa3e0"/>
<path d="M1511 389L1518 381H1527L1520 389Z" fill="#8ac6f5"/>
<path d="M1513 406L1518 411L1526 402" stroke="#45c070" stroke-width="2.500" fill="none"/>
<text x="1536" y="367">0</text><text x="1535" y="390" class="w" textLength="54" lengthAdjust="spacingAndGlyphs">Imagem</text><text x="1535" y="413" textLength="51" lengthAdjust="spacingAndGlyphs">Auxiliar</text>
<g id="r1"><use href="#bulb" x="1635" y="359"/><use href="#sun" x="1659" y="361.500"/><use href="#lock" x="1680" y="361"/><use href="#print" x="1705" y="361.500"/></g>
<use href="#r1" y="23"/><use href="#r1" y="46"/>
<rect x="1720.500" y="354.500" width="14" height="14" fill="#fff" stroke="#bbb"/>
<rect x="1720.500" y="377.500" width="14" height="14" fill="#fff" stroke="#ccc"/>
<rect x="1720.500" y="400.500" width="14" height="14" fill="#f00" stroke="#ddd"/>
<text x="1739" y="367">wh...</text><text x="1739" y="390">wh...</text><text x="1740" y="413">red</text>
<text x="1780" y="367" textLength="65" lengthAdjust="spacingAndGlyphs">Continu...</text><text x="1780" y="390" textLength="65" lengthAdjust="spacingAndGlyphs">Continu...</text><text x="1780" y="413" textLength="65" lengthAdjust="spacingAndGlyphs">Continu...</text>
<path d="M1858 362H1885M1858 385H1885M1858 408H1885" stroke="#f0f0f0"/>
<text x="1892" y="367">Default</text><text x="1892" y="390">Default</text><text x="1892" y="413">Default</text>
<!-- layer bottom -->
<rect x="1471" y="953" width="32" height="33" fill="#3b4453" stroke="#2f3540"/>
<path d="M1483 967L1488 973L1483 979M1489 967L1494 973L1489 979" stroke="#d0d0d0" stroke-width="2.500" fill="none"/>
<rect x="1508" y="965" width="411" height="21" fill="#f2f2f2"/>
<rect x="1529" y="974" width="159" height="3" rx="1" fill="#888"/>
<path d="M1472 1010H1479L1482 1014H1490V1030H1472Z" fill="#d8d8d8"/><path d="M1489 1018L1484 1026H1487L1485 1033L1492 1023H1489Z" fill="#f3c56a"/>
<path d="M1495 1014H1503L1499 1020Z" fill="#ccc"/>
<text x="1513" y="1021" style="fill:#e2e6ea" textLength="250" lengthAdjust="spacingAndGlyphs">All: 3 layers displayed of 3 total layers</text>

<!-- status bar -->
<rect y="1043" width="1919" height="35" fill="#222933"/>
<rect y="1078" width="1919" height="2" fill="#f2f2f2"/>
<path d="M52 1072L62 1043H137L125 1072Z" fill="#3b4453"/>
<path d="M20 1050H40M20 1057H40M20 1064H40" stroke="#d8d8d8" stroke-width="2.500"/>
<text x="72" y="1063" style="font-weight:bold;fill:#f0f2f4;font-size:14.500px" textLength="44" lengthAdjust="spacingAndGlyphs">Model</text>
<text x="146" y="1063" style="fill:#dfe3e7" textLength="51" lengthAdjust="spacingAndGlyphs">Layout1</text>
<path d="M210 1068L217 1048M295 1068L300 1048M346 1068L351 1048" stroke="#5a626f"/>
<text x="228" y="1063" style="fill:#dfe3e7" textLength="51" lengthAdjust="spacingAndGlyphs">Layout2</text>
<path d="M322 1049V1067M313 1058H331" stroke="#e0e0e0" stroke-width="2"/>
<g fill="#3b4453"><rect x="1238" y="1045" width="141" height="31"/><rect x="1383" y="1045" width="211" height="31"/><rect x="1598" y="1045" width="131" height="31"/><rect x="1732" y="1045" width="50" height="31"/><rect x="1783" y="1045" width="32" height="31"/><rect x="1816" y="1045" width="30" height="31"/><rect x="1849" y="1045" width="4" height="31"/><rect x="1856" y="1045" width="30" height="31"/><rect x="1888" y="1045" width="31" height="31"/></g>
<g fill="#5e8dc3"><rect x="1300" y="1045" width="29" height="31"/><rect x="1515" y="1045" width="28" height="31"/><rect x="1544" y="1045" width="29" height="31"/><rect x="1598" y="1045" width="28" height="31"/></g>
<text x="1242" y="1066" class="w s" textLength="50" lengthAdjust="spacingAndGlyphs">MODEL</text>
<path d="M1305 1050V1071M1311 1050V1071M1318 1050V1071M1324 1050V1071M1303 1053H1327M1303 1059H1327M1303 1065H1327M1303 1069H1327" stroke="#f4f4f4" stroke-width="1" fill="none"/>
<g fill="#d8d8d8"><circle cx="1338" cy="1053" r="1.300"/><circle cx="1344" cy="1053" r="1.300"/><circle cx="1350" cy="1053" r="1.300"/><circle cx="1338" cy="1060" r="1.300"/><circle cx="1344" cy="1060" r="1.300"/><circle cx="1350" cy="1060" r="1.300"/><circle cx="1338" cy="1067" r="1.300"/><circle cx="1344" cy="1067" r="1.300"/><circle cx="1350" cy="1067" r="1.300"/></g>
<use href="#cl" x="1370" y="1060"/><use href="#cl" x="1453" y="1060"/><use href="#cl" x="1503" y="1060"/><use href="#cl" x="1584" y="1060"/><use href="#cl" x="1719" y="1060"/><use href="#cl" x="1772" y="1060"/>
<path d="M1388 1051V1070H1408M1388 1063H1395V1070" stroke="#c9c9c9" fill="none"/>
<circle cx="1427" cy="1060" r="9" fill="none" stroke="#aaa"/><path d="M1418 1068L1438 1052M1423 1060H1440" stroke="#ccc" fill="none"/>
<path d="M1470 1051L1486 1071" stroke="#e05a50"/><path d="M1478 1050V1071" stroke="#45c070"/><rect x="1476" y="1058" width="4" height="4" fill="#888"/>
<path d="M1518 1070H1541M1520 1070L1538 1050" stroke="#f0f0f0" fill="none"/><rect x="1527" y="1058" width="4" height="4" fill="#fff"/>
<rect x="1550" y="1051" width="19" height="20" fill="none" stroke="#f0f0f0" stroke-width="1.300"/><rect x="1547" y="1048" width="6" height="6" fill="#5e8dc3" stroke="#f0f0f0"/>
<path d="M1612 1050L1617 1062L1624 1072L1614 1068L1610 1072L1606 1068L1601 1072L1607 1062Z" fill="#f0f0f0"/><circle cx="1622" cy="1052" r="3" fill="none" stroke="#f0f0f0"/>
<path d="M1641 1050L1646 1062L1653 1072L1643 1068L1641 1071L1638 1068L1629 1072L1636 1062Z" fill="#c4c4c4"/><path d="M1650 1048L1647 1054H1651L1648 1060" stroke="#c4c4c4" fill="none"/>
<path d="M1672 1050L1677 1062L1684 1072L1674 1068L1672 1071L1669 1068L1660 1072L1667 1062Z" fill="#c4c4c4"/>
<text x="1692" y="1066" class="w" textLength="17" lengthAdjust="spacingAndGlyphs">1:1</text>
<use href="#gear" transform="translate(1747,1060) scale(.95)"/>
<path d="M1798 1050V1070M1788 1060H1808" stroke="#e0e0e0" stroke-width="2.300"/>
<rect x="1821" y="1051" width="7" height="7" fill="none" stroke="#cfcfcf"/><circle cx="1839" cy="1059" r="4.500" fill="none" stroke="#cfcfcf"/><path d="M1825 1070L1829 1063L1833 1070Z" fill="none" stroke="#cfcfcf"/>
<rect x="1861" y="1050" width="20" height="20" fill="#555b66" stroke="#aaa"/><path d="M1865 1066L1877 1054M1871 1054H1877V1060M1865 1060V1066H1871" stroke="#e0e0e0" fill="none"/>
<path d="M1893 1051H1914M1893 1060H1914M1893 1069H1914" stroke="#e0e0e0" stroke-width="2.500"/>
</svg>
</body></html>
